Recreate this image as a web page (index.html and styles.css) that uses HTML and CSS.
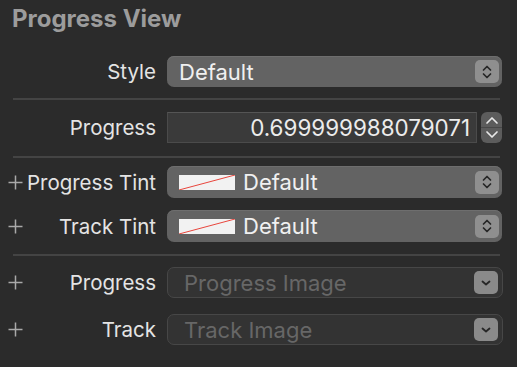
FILE: index.html
```html
<!DOCTYPE html>
<html lang="en">
<head>
  <meta charset="UTF-8">
  <title>Progress View</title>
  <link rel="stylesheet" href="styles.css">
</head>
<body>
  <div class="inspector">
    <h2 class="title">Progress View</h2>

    <div class="section first">
      <div class="row">
        <div class="label-cell"><span class="label">Style</span></div>
        <div class="popup">
          <span class="value">Default</span>
          <span class="popup-btn">
            <svg width="10" height="16" viewBox="0 0 10 16"><path d="M1.5 6 L5 2.5 L8.5 6 M1.5 10 L5 13.5 L8.5 10" fill="none" stroke="#262626" stroke-width="1.7" stroke-linecap="round" stroke-linejoin="round"/></svg>
          </span>
        </div>
      </div>
    </div>
    <div class="divider"></div>

    <div class="section second">
      <div class="row">
        <div class="label-cell"><span class="label">Progress</span></div>
        <div class="field-wrap">
          <div class="field">0.699999988079071</div>
          <div class="stepper">
            <svg width="14" height="9" viewBox="0 0 14 9"><path d="M2 7 L7 2 L12 7" fill="none" stroke="#e8e8e8" stroke-width="1.7" stroke-linecap="round" stroke-linejoin="round"/></svg>
            <span class="stepper-line"></span>
            <svg width="14" height="9" viewBox="0 0 14 9"><path d="M2 2 L7 7 L12 2" fill="none" stroke="#e8e8e8" stroke-width="1.7" stroke-linecap="round" stroke-linejoin="round"/></svg>
          </div>
        </div>
      </div>
    </div>
    <div class="divider"></div>

    <div class="section third">
      <div class="row">
        <div class="label-cell">
          <svg class="plus" width="15" height="15" viewBox="0 0 15 15"><path d="M7.5 0.5 V14.5 M0.5 7.5 H14.5" stroke="#a9a9a9" stroke-width="1.5"/></svg>
          <span class="label">Progress Tint</span>
        </div>
        <div class="popup">
          <span class="swatch"><svg width="56" height="15" viewBox="0 0 56 15"><line x1="0" y1="15" x2="56" y2="0" stroke="#e8453c" stroke-width="1"/></svg></span>
          <span class="value">Default</span>
          <span class="popup-btn">
            <svg width="10" height="16" viewBox="0 0 10 16"><path d="M1.5 6 L5 2.5 L8.5 6 M1.5 10 L5 13.5 L8.5 10" fill="none" stroke="#262626" stroke-width="1.7" stroke-linecap="round" stroke-linejoin="round"/></svg>
          </span>
        </div>
      </div>
      <div class="row">
        <div class="label-cell">
          <svg class="plus" width="15" height="15" viewBox="0 0 15 15"><path d="M7.5 0.5 V14.5 M0.5 7.5 H14.5" stroke="#a9a9a9" stroke-width="1.5"/></svg>
          <span class="label">Track Tint</span>
        </div>
        <div class="popup">
          <span class="swatch"><svg width="56" height="15" viewBox="0 0 56 15"><line x1="0" y1="15" x2="56" y2="0" stroke="#e8453c" stroke-width="1"/></svg></span>
          <span class="value">Default</span>
          <span class="popup-btn">
            <svg width="10" height="16" viewBox="0 0 10 16"><path d="M1.5 6 L5 2.5 L8.5 6 M1.5 10 L5 13.5 L8.5 10" fill="none" stroke="#262626" stroke-width="1.7" stroke-linecap="round" stroke-linejoin="round"/></svg>
          </span>
        </div>
      </div>
    </div>
    <div class="divider"></div>

    <div class="section fourth">
      <div class="row">
        <div class="label-cell">
          <svg class="plus" width="15" height="15" viewBox="0 0 15 15"><path d="M7.5 0.5 V14.5 M0.5 7.5 H14.5" stroke="#a9a9a9" stroke-width="1.5"/></svg>
          <span class="label">Progress</span>
        </div>
        <div class="popup disabled">
          <span class="placeholder">Progress Image</span>
          <span class="popup-btn small">
            <svg width="12" height="8" viewBox="0 0 12 8"><path d="M2.5 2.5 L6 5.5 L9.5 2.5" fill="none" stroke="#262626" stroke-width="1.8" stroke-linecap="round" stroke-linejoin="round"/></svg>
          </span>
        </div>
      </div>
      <div class="row">
        <div class="label-cell">
          <svg class="plus" width="15" height="15" viewBox="0 0 15 15"><path d="M7.5 0.5 V14.5 M0.5 7.5 H14.5" stroke="#a9a9a9" stroke-width="1.5"/></svg>
          <span class="label">Track</span>
        </div>
        <div class="popup disabled">
          <span class="placeholder">Track Image</span>
          <span class="popup-btn small">
            <svg width="12" height="8" viewBox="0 0 12 8"><path d="M2.5 2.5 L6 5.5 L9.5 2.5" fill="none" stroke="#262626" stroke-width="1.8" stroke-linecap="round" stroke-linejoin="round"/></svg>
          </span>
        </div>
      </div>
    </div>
  </div>
</body>
</html>
```

FILE: styles.css
```css
* {
  box-sizing: border-box;
}

body {
  margin: 0;
  background: #2b2b2b;
  font-family: Inter, 'Noto Sans', sans-serif;
  color: #e2e2e2;
  width: 517px;
  height: 367px;
  overflow: hidden;
}

.inspector {
  padding: 0 15px 0 0;
}

.title {
  margin: 0;
  padding-left: 12px;
  height: 38px;
  line-height: 38px;
  font-size: 24px;
  font-weight: 700;
  color: #9c9c9c;
}

.section {
  display: flex;
  flex-direction: column;
}

.section.first {
  padding: 18px 0 11px;
}

.section.second {
  padding: 12px 0 13px;
}

.section.third {
  padding: 8px 0 12px;
  gap: 12px;
}

.section.fourth {
  padding: 11px 0 0;
  gap: 16px;
}

.divider {
  height: 2px;
  margin-left: 13px;
  margin-right: 2px;
  background: #444444;
}

.row {
  display: flex;
  align-items: center;
  gap: 11px;
  height: 31px;
}

.third .row {
  height: 32px;
}

.label-cell {
  width: 156px;
  flex-shrink: 0;
  display: flex;
  align-items: center;
}

.label {
  margin-left: auto;
  font-size: 20.5px;
  color: #e4e4e4;
  white-space: nowrap;
}

.plus {
  margin-left: 8px;
  flex-shrink: 0;
}

.popup {
  flex: 1;
  height: 100%;
  display: flex;
  align-items: center;
  background: #636363;
  border-radius: 7px;
  padding: 0 3px 0 12px;
  box-shadow: inset 0 1px 0 #6e6e6e;
}

.value {
  font-size: 22px;
  color: #f0f0f0;
}

.popup-btn {
  margin-left: auto;
  width: 24px;
  height: 23px;
  border-radius: 5px;
  background: #8f8f8f;
  display: flex;
  align-items: center;
  justify-content: center;
}

.swatch {
  width: 56px;
  height: 15px;
  background: #f2f2f2;
  margin-right: 8px;
  display: flex;
}

.popup.disabled {
  background: #333333;
  border: 1px solid #474747;
  box-shadow: none;
  padding-left: 16px;
  margin-right: -1px;
}

.placeholder {
  font-size: 22px;
  color: #676767;
}

.popup-btn.small {
  background: #8a8a8a;
  margin-right: 1px;
}

.field-wrap {
  flex: 1;
  height: 100%;
  display: flex;
  gap: 4px;
}

.field {
  flex: 1;
  background: #3a3a3a;
  border: 1px solid #4b4b4b;
  border-top-color: #555555;
  font-size: 22.4px;
  color: #ececec;
  text-align: right;
  padding-right: 6px;
  line-height: 29px;
}

.stepper {
  width: 21px;
  border-radius: 6px;
  background: #5c5c5c;
  display: flex;
  flex-direction: column;
  align-items: center;
  justify-content: center;
  gap: 2px;
}

.stepper-line {
  width: 100%;
  height: 1px;
  background: #484848;
}
```
